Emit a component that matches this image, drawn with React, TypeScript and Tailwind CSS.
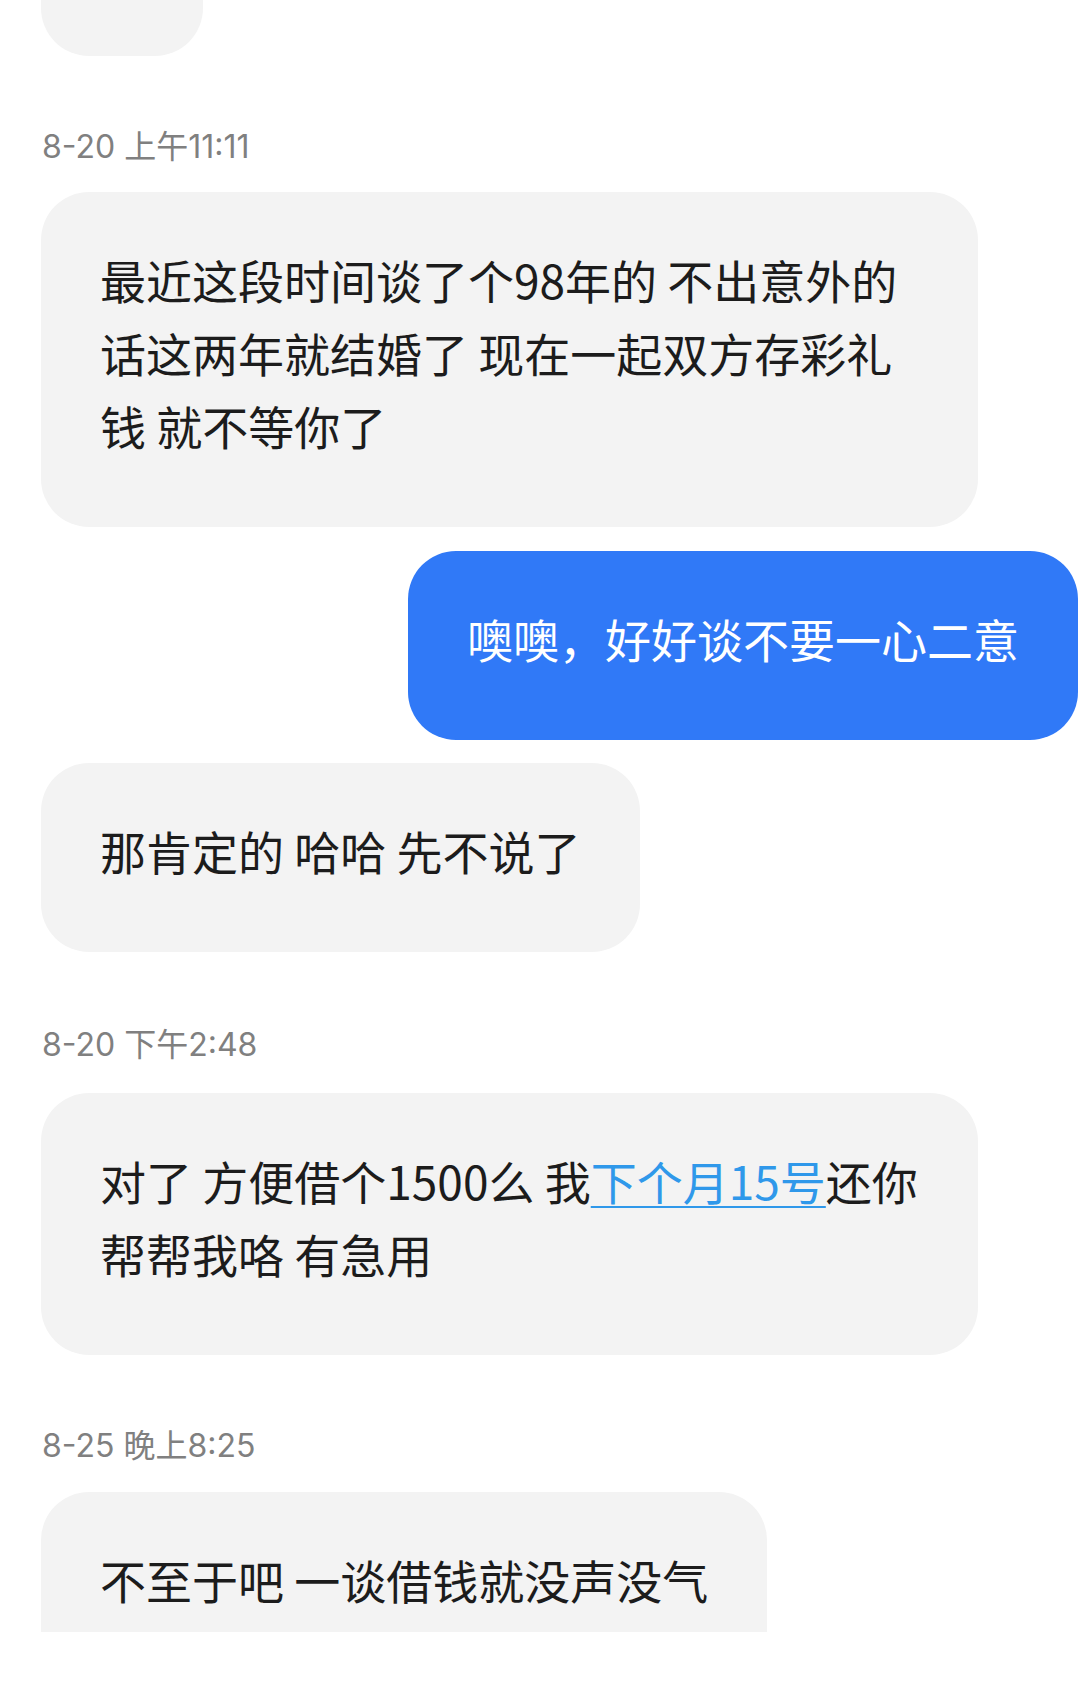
import React from "react";

const Stamp = ({ text, className }: { text: string; className: string }) => (
  <div className={`h-[40px] pl-[42px] font-['Inter','Noto_Sans_CJK_SC',sans-serif] text-[32px] leading-[38px] text-[#808080] ${className}`}>{text}</div>
);

export default function App() {
  return (
    <div className="w-[1080px] h-[1683px] overflow-hidden bg-white font-['Noto_Sans_CJK_SC','Noto_Sans',sans-serif] text-[#1c1c1c]">
      <div className="flex flex-col">
        <div className="ml-[41px] w-[162px] h-[56px] rounded-b-[48px] bg-[#f3f3f3]" />

        <Stamp text="8-20 上午11:11" className="mt-[72px]" />

        <div className="mt-[24px] ml-[41px] w-[937px] rounded-[48px] bg-[#f3f3f3] pl-[59px] pr-[40px] pt-[51px] pb-[65px] text-[46px] leading-[73px]">
          <div className="whitespace-pre">最近这段时间谈了个98年的 不出意外的</div>
          <div className="whitespace-pre">话这两年就结婚了 现在一起双方存彩礼</div>
          <div className="whitespace-pre">钱 就不等你了</div>
        </div>

        <div className="mt-[24px] self-end mr-[2px] rounded-[48px] bg-[#3079f7] px-[59px] pt-[51px] pb-[65px] text-[46px] leading-[73px] text-white">
          <div className="whitespace-pre">噢噢，好好谈不要一心二意</div>
        </div>

        <div className="mt-[23px] self-start ml-[41px] rounded-[48px] bg-[#f3f3f3] px-[59px] pt-[51px] pb-[65px] text-[46px] leading-[73px]">
          <div className="whitespace-pre">那肯定的 哈哈 先不说了</div>
        </div>

        <Stamp text="8-20 下午2:48" className="mt-[74px]" />

        <div className="mt-[27px] ml-[41px] w-[937px] rounded-[48px] bg-[#f3f3f3] pl-[59px] pr-[40px] pt-[51px] pb-[65px] text-[46px] leading-[73px]">
          <div className="whitespace-pre">
            对了 方便借个1500么 我
            <span className="text-[#2f98ea] underline decoration-[2px] underline-offset-[6px]">下个月15号</span>
            还你
          </div>
          <div className="whitespace-pre">帮帮我咯 有急用</div>
        </div>

        <Stamp text="8-25 晚上8:25" className="mt-[72px]" />

        <div className="mt-[25px] self-start ml-[41px] h-[140px] overflow-hidden rounded-t-[48px] bg-[#f3f3f3] px-[59px] pt-[51px] text-[46px] leading-[73px]">
          <div className="whitespace-pre">不至于吧 一谈借钱就没声没气</div>
        </div>
      </div>
    </div>
  );
}
